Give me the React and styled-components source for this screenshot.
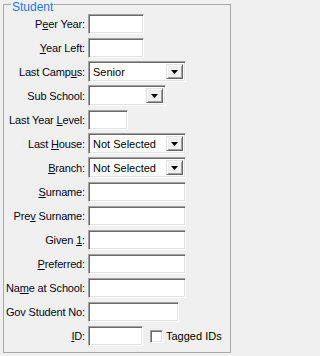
import React from 'react'
import styled, { createGlobalStyle } from 'styled-components'

const Global = createGlobalStyle`
  html, body {
    margin: 0;
    background: #f0f0f0;
  }
  body {
    font-family: 'Liberation Sans', Arial, sans-serif;
    font-size: 11px;
    color: #000;
  }
`

const rows = [
  { label: 'Peer Year:', key: 1, kind: 'text', width: 56 },
  { label: 'Year Left:', key: 0, kind: 'text', width: 56 },
  { label: 'Last Campus:', key: 9, kind: 'select', width: 98, value: 'Senior' },
  { label: 'Sub School:', key: -1, kind: 'select', width: 78, value: '' },
  { label: 'Last Year Level:', key: 10, kind: 'text', width: 40 },
  { label: 'Last House:', key: 5, kind: 'select', width: 98, value: 'Not Selected' },
  { label: 'Branch:', key: 0, kind: 'select', width: 98, value: 'Not Selected' },
  { label: 'Surname:', key: 0, kind: 'text', width: 98 },
  { label: 'Prev Surname:', key: 3, kind: 'text', width: 98 },
  { label: 'Given 1:', key: 6, kind: 'text', width: 98 },
  { label: 'Preferred:', key: 0, kind: 'text', width: 98 },
  { label: 'Name at School:', key: 2, kind: 'text', width: 98 },
  { label: 'Gov Student No:', key: -1, kind: 'text', width: 91 },
  { label: 'ID:', key: 0, kind: 'id', width: 55 },
]

const AccessLabel = ({ text, at }) =>
  at < 0 ? <span>{text}</span> : (
    <span>
      {text.slice(0, at)}
      <u>{text[at]}</u>
      {text.slice(at + 1)}
    </span>
  )

const Student = () => (
  <Page>
    <Global />
    <Frame>
      <Title>Student</Title>
      <Form>
        {rows.map((r) => (
          <React.Fragment key={r.label}>
            <Label>
              <AccessLabel text={r.label} at={r.key} />
            </Label>
            <Cell>
              {r.kind === 'select' ? (
                <Select $w={r.width}>
                  <SelectText>{r.value}</SelectText>
                  <DropButton>
                    <svg width="7" height="4" viewBox="0 0 7 4">
                      <path d="M0 0h7L3.5 4z" fill="#000" />
                    </svg>
                  </DropButton>
                </Select>
              ) : (
                <TextBox $w={r.width} />
              )}
              {r.kind === 'id' && (
                <Check>
                  <CheckBox />
                  <span>Tagged IDs</span>
                </Check>
              )}
            </Cell>
          </React.Fragment>
        ))}
      </Form>
    </Frame>
  </Page>
)

export default Student

// STYLED COMPONENTS

const Page = styled.div`
  width: 235px;
  height: 356px;
  padding: 4px 0 0 3px;
  box-sizing: border-box;
`

const Frame = styled.div`
  position: relative;
  width: 228px;
  box-sizing: border-box;
  border: 1px solid #a9a9a9;
  padding: 9px 0 6px 0;
`

const Title = styled.span`
  position: absolute;
  top: -4px;
  left: 7px;
  padding: 0 1px;
  background: #f0f0f0;
  color: #1c78e6;
  font-size: 12px;
  line-height: 12px;
`

const Form = styled.div`
  display: grid;
  grid-template-columns: 81px 1fr;
  column-gap: 3px;
  row-gap: 4px;
  grid-auto-rows: 20px;
`

const Label = styled.div`
  display: flex;
  align-items: center;
  justify-content: flex-end;
  white-space: nowrap;
  letter-spacing: -0.15px;
  color: #05051a;
  u {
    text-underline-offset: 1px;
  }
`

const Cell = styled.div`
  display: flex;
  align-items: center;
`

const sunken = `
  box-sizing: border-box;
  border: 1px solid;
  border-color: #a0a0a0 #ffffff #ffffff #a0a0a0;
  box-shadow: inset 1px 1px #696969, inset -1px -1px #e3e3e3;
  background: #fff;
`

const TextBox = styled.div`
  ${sunken}
  width: ${(p) => p.$w}px;
  height: 20px;
`

const Select = styled.div`
  ${sunken}
  width: ${(p) => p.$w}px;
  height: 21px;
  margin-top: -1px;
  display: flex;
  align-items: stretch;
  padding: 2px;
`

const SelectText = styled.div`
  flex: 1;
  display: flex;
  align-items: center;
  padding-left: 2px;
  font-size: 11px;
  white-space: nowrap;
  overflow: hidden;
`

const DropButton = styled.div`
  width: 17px;
  box-sizing: border-box;
  display: flex;
  align-items: center;
  justify-content: center;
  background: #f0f0f0;
  border: 1px solid;
  border-color: #e3e3e3 #696969 #696969 #e3e3e3;
  box-shadow: inset 1px 1px #fff, inset -1px -1px #a0a0a0;
`

const Check = styled.label`
  display: flex;
  align-items: center;
  gap: 3px;
  margin-left: 7px;
  white-space: nowrap;
`

const CheckBox = styled.span`
  ${sunken}
  width: 13px;
  height: 13px;
`
